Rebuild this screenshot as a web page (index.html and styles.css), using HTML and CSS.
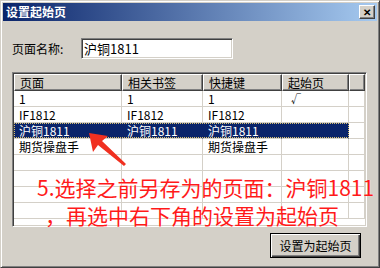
FILE: index.html
```html
<!DOCTYPE html>
<html lang="zh-CN">
<head>
  <meta charset="UTF-8" />
  <title>设置起始页</title>
  <link rel="stylesheet" href="styles.css">
</head>
<body>
  <div class="window">
    <div class="titlebar">
      <span class="title">设置起始页</span>
      <span class="close">✕</span>
    </div>

    <div class="content">
      <div class="form-row">
        <label class="label">页面名称:</label>
        <div class="input">沪铜1811</div>
      </div>

      <div class="listview">
        <div class="row head">
          <div class="cell">页面</div>
          <div class="cell">相关书签</div>
          <div class="cell">快捷键</div>
          <div class="cell">起始页</div>
          <div class="cell"></div>
        </div>
        <div class="row">
          <div class="cell">1</div>
          <div class="cell">1</div>
          <div class="cell">1</div>
          <div class="cell check">√</div>
          <div class="cell"></div>
        </div>
        <div class="row">
          <div class="cell">IF1812</div>
          <div class="cell">IF1812</div>
          <div class="cell">IF1812</div>
          <div class="cell"></div>
          <div class="cell"></div>
        </div>
        <div class="row selected">
          <div class="cell">沪铜1811</div>
          <div class="cell">沪铜1811</div>
          <div class="cell">沪铜1811</div>
          <div class="cell"></div>
          <div class="cell"></div>
        </div>
        <div class="row">
          <div class="cell">期货操盘手</div>
          <div class="cell"></div>
          <div class="cell">期货操盘手</div>
          <div class="cell"></div>
          <div class="cell"></div>
        </div>
        <div class="row"><div class="cell"></div><div class="cell"></div><div class="cell"></div><div class="cell"></div><div class="cell"></div></div>
        <div class="row"><div class="cell"></div><div class="cell"></div><div class="cell"></div><div class="cell"></div><div class="cell"></div></div>
        <div class="row"><div class="cell"></div><div class="cell"></div><div class="cell"></div><div class="cell"></div><div class="cell"></div></div>
        <div class="row"><div class="cell"></div><div class="cell"></div><div class="cell"></div><div class="cell"></div><div class="cell"></div></div>
      </div>

      <div class="actions">
        <button class="btn">设置为起始页</button>
      </div>
    </div>

    <!-- annotation drawn over the screenshot -->
    <svg class="arrow" width="50" height="40" viewBox="0 0 50 40">
      <polygon points="2,2 21,5 15,10 39,33 37,35 11,14 6,21" fill="#f03020" />
    </svg>
    <div class="note">
      <div>5.选择之前另存为的页面：沪铜1811</div>
      <div class="note-2">，再选中右下角的设置为起始页</div>
    </div>
  </div>
</body>
</html>
```

FILE: styles.css
```css
body {
  margin: 0;
  font-family: "Noto Sans CJK SC", sans-serif;
  font-size: 12px;
  color: #000;
  background: #d4d0c8;
}
.window {
  position: relative;
  width: 380px;
  height: 268px;
  box-sizing: border-box;
  background: #d4d0c8;
  border: 1px solid;
  border-color: #d4d0c8 #404040 #404040 #d4d0c8;
  box-shadow: inset 1px 1px #fff, inset -1px -1px #808080;
  padding: 2px;
  overflow: hidden;
}
.titlebar {
  height: 18px;
  display: flex;
  align-items: center;
  justify-content: space-between;
  padding: 0 2px 0 3px;
  background: linear-gradient(90deg, #0a246a, #a6caf0);
}
.title {
  color: #fff;
  font-weight: bold;
  font-size: 12px;
  line-height: 18px;
}
.close {
  width: 14px;
  height: 12px;
  line-height: 12px;
  text-align: center;
  font-size: 10px;
  font-weight: bold;
  background: #d4d0c8;
  border: 1px solid;
  border-color: #fff #404040 #404040 #fff;
  box-shadow: inset -1px -1px #808080;
}
.content {
  padding: 16px 10px 0 9px;
}
.form-row {
  display: flex;
  align-items: center;
  height: 23px;
}
.label {
  width: 69px;
}
.input {
  width: 148px;
  height: 19px;
  line-height: 19px;
  padding-left: 2px;
  font-size: 13px;
  background: #fff;
  border: 1px solid;
  border-color: #808080 #fff #fff #808080;
  box-shadow: inset 1px 1px #404040, inset -1px -1px #d4d0c8;
}
.listview {
  margin-top: 12px;
  height: 155px;
  box-sizing: border-box;
  background: #fff;
  border: 1px solid;
  border-color: #808080 #fff #fff #808080;
  box-shadow: inset 1px 1px #404040, inset -1px -1px #d4d0c8;
  padding: 1px;
  overflow: hidden;
}
.row {
  display: grid;
  grid-template-columns: 108px 81px 79px 67px 1fr;
  height: 16px;
}
.cell {
  box-sizing: border-box;
  padding-left: 5px;
  line-height: 15px;
  white-space: nowrap;
  border-right: 1px solid #d4d0c8;
  border-bottom: 1px solid #d4d0c8;
}
.head {
  height: 17px;
}
.head .cell {
  line-height: 15px;
  background: #d4d0c8;
  border: 1px solid;
  border-color: #fff #404040 #404040 #fff;
  box-shadow: inset -1px -1px #808080;
}
.check {
  padding-left: 9px;
  font-size: 10px;
}
.selected {
  position: relative;
}
.selected .cell {
  background: #0a246a;
  color: #fff;
  border-right-color: #0a246a;
}
.selected .cell:last-child {
  background: #fff;
  border-right-color: #d4d0c8;
}
.selected::after {
  content: "";
  position: absolute;
  left: 0;
  top: 0;
  width: 335px;
  height: 15px;
  box-sizing: border-box;
  border: 1px dotted #d8c070;
}
.actions {
  display: flex;
  justify-content: flex-end;
  margin-top: 6px;
  padding-right: 6px;
}
.btn {
  width: 91px;
  height: 25px;
  font-family: "Noto Sans CJK SC", sans-serif;
  font-size: 12px;
  background: #d4d0c8;
  border: 1px solid #000;
  box-shadow: inset 1px 1px #fff, inset -1px -1px #404040, inset -2px -2px #808080;
  padding: 0;
}
.arrow {
  position: absolute;
  left: 86px;
  top: 130px;
}
.note {
  position: absolute;
  left: 36px;
  top: 172px;
  color: #ff1a1a;
  font-size: 21px;
  line-height: 28px;
  white-space: nowrap;
  text-shadow: 0 0 1px #fff;
}
.note-2 {
  padding-left: 8px;
}
```
